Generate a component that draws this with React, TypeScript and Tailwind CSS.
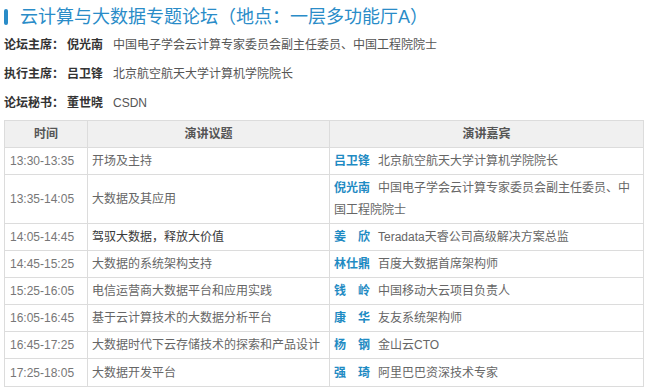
import React from "react";

const font = { fontFamily: '"Liberation Sans", "Noto Sans CJK SC", sans-serif' };

type Row = { time: string; topic: string; name: string; desc: string; dark?: boolean; tall?: boolean };

const rows: Row[] = [
  { time: "13:30-13:35", topic: "开场及主持", name: "吕卫锋", desc: "北京航空航天大学计算机学院院长" },
  { time: "13:35-14:05", topic: "大数据及其应用", name: "倪光南", desc: "中国电子学会云计算专家委员会副主任委员、中国工程院院士", tall: true },
  { time: "14:05-14:45", topic: "驾驭大数据，释放大价值", name: "姜　欣", desc: "Teradata天睿公司高级解决方案总监", dark: true },
  { time: "14:45-15:25", topic: "大数据的系统架构支持", name: "林仕鼎", desc: "百度大数据首席架构师" },
  { time: "15:25-16:05", topic: "电信运营商大数据平台和应用实践", name: "钱　岭", desc: "中国移动大云项目负责人" },
  { time: "16:05-16:45", topic: "基于云计算技术的大数据分析平台", name: "康　华", desc: "友友系统架构师" },
  { time: "16:45-17:25", topic: "大数据时代下云存储技术的探索和产品设计", name: "杨　钢", desc: "金山云CTO" },
  { time: "17:25-18:05", topic: "大数据开发平台", name: "强　琦", desc: "阿里巴巴资深技术专家" },
];

const info = [
  { label: "论坛主席：", name: "倪光南", desc: "中国电子学会云计算专家委员会副主任委员、中国工程院院士" },
  { label: "执行主席：", name: "吕卫锋", desc: "北京航空航天大学计算机学院院长" },
  { label: "论坛秘书：", name: "董世晓", desc: "CSDN" },
];

export default function App() {
  return (
    <div className="w-[649px] h-[390px] bg-white overflow-hidden" style={font}>
      <div className="h-[30px] flex items-start pt-[7px] pl-[4px]">
        <div className="w-[4px] h-[16px] mt-[2px] rounded-[2px] bg-[#2a8cc8]" />
        <div className="ml-[12px] text-[18px] leading-[20px] text-[#2a8cc8]">
          云计算与大数据专题论坛（地点：一层多功能厅A）
        </div>
      </div>
      {info.map((it) => (
        <div key={it.label} className="h-[29px] flex items-center pl-[4px] text-[12px] leading-[16px] whitespace-nowrap">
          <span className="font-bold text-[#333]">{it.label}</span>
          <span className="font-bold text-[#333] ml-[3px]">{it.name}</span>
          <span className="text-[#555] ml-[10px]">{it.desc}</span>
        </div>
      ))}
      <div className="mt-[3px] ml-[4px] w-[640px] border border-[#dcdcdc] text-[12px] leading-[22px]">
        <div className="grid grid-cols-[83px_242px_313px] h-[27px] bg-[#f0f0f0] border-b border-[#dcdcdc] font-bold text-[#555]">
          <div className="flex items-center justify-center border-r border-[#dcdcdc]">时间</div>
          <div className="flex items-center justify-center border-r border-[#dcdcdc]">演讲议题</div>
          <div className="flex items-center justify-center">演讲嘉宾</div>
        </div>
        {rows.map((r, i) => (
          <div
            key={r.time}
            className={
              "grid grid-cols-[83px_242px_313px] " +
              (r.tall ? "h-[49px] " : i < rows.length - 1 ? "h-[27px] " : "h-[27px] ") +
              (i < rows.length - 1 ? "border-b border-[#dcdcdc]" : "")
            }
          >
            <div className="flex items-center pl-[5px] border-r border-[#dcdcdc] text-[#777] whitespace-nowrap">{r.time}</div>
            <div className={"flex items-center pl-[4px] border-r border-[#dcdcdc] whitespace-nowrap " + (r.dark ? "text-[#3a3a3a]" : "text-[#666]")}>
              {r.topic}
            </div>
            <div className="flex items-center pl-[4px] pr-[6px] text-[#666]">
              <div>
                <span className="font-bold text-[#1f8bc3]">{r.name}</span>
                <span className="ml-[8px]">{r.desc}</span>
              </div>
            </div>
          </div>
        ))}
      </div>
    </div>
  );
}
